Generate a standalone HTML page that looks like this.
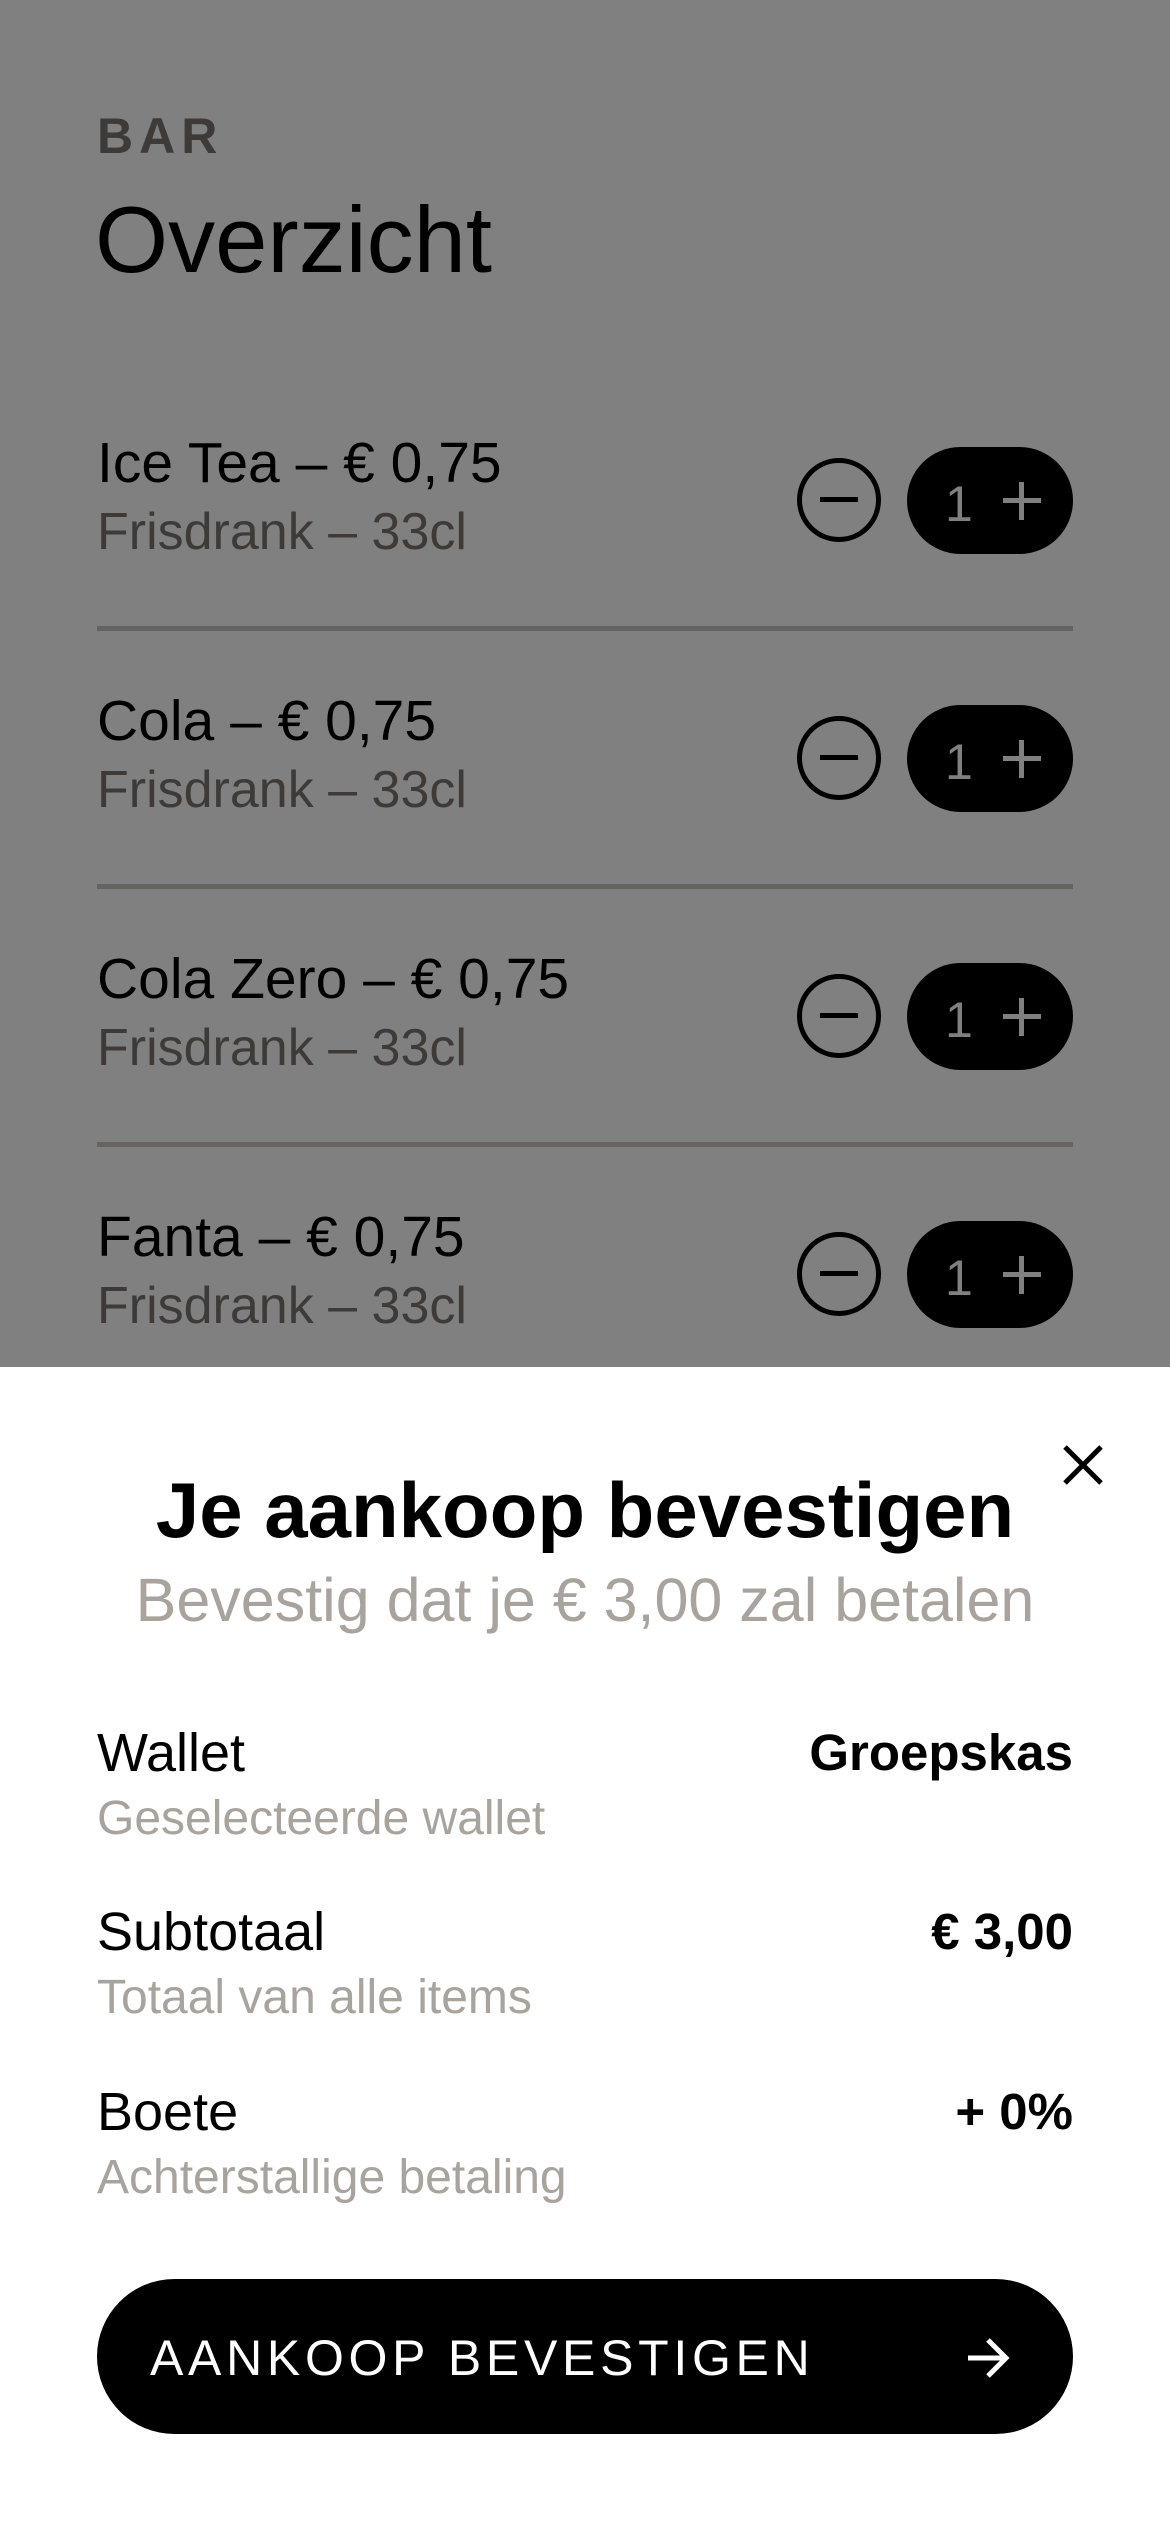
<!DOCTYPE html>
<html><head><meta charset="utf-8"><style>
*{margin:0;padding:0;box-sizing:border-box}
body{width:1170px;height:2532px;position:relative;overflow:hidden;background:#808080;font-family:"Liberation Sans",sans-serif;color:#000}
.a{position:absolute;line-height:1;white-space:nowrap}
.t{font-size:57px;left:97px}
.s{font-size:52px;left:97px;color:#3d3a37}
.hr{position:absolute;left:97px;width:976px;height:5px;background:#666461}
.min{position:absolute;left:797px;width:84px;height:84px;border:5px solid #000;border-radius:50%}
.min:after{content:"";position:absolute;left:18px;right:18px;top:34px;height:5px;background:#000}
.pill{position:absolute;left:907px;width:166px;height:107px;background:#000;border-radius:54px}
.pill .n{position:absolute;left:38px;top:28px;font-size:50px;color:#808080}
.pill .p1{position:absolute;left:96px;top:51px;width:38px;height:5px;background:#808080}
.pill .p2{position:absolute;left:112px;top:35px;width:5px;height:38px;background:#808080}
.sheet{position:absolute;left:0;top:1367px;width:1170px;height:1165px;background:#fff}
.l{font-size:54px;left:97px}
.r{font-size:51px;right:97px;font-weight:bold}
.g{font-size:48px;left:97px;color:#a8a39d}
</style></head><body>
<div class="a" style="left:97px;top:111px;font-size:50px;font-weight:bold;letter-spacing:6px;color:#3d3a37">BAR</div>
<div class="a" style="left:95px;top:193px;font-size:94px">Overzicht</div>

<div class="a t" style="top:435px">Ice Tea – € 0,75</div>
<div class="a s" style="top:506px">Frisdrank – 33cl</div>
<div class="min" style="top:458px"></div>
<div class="pill" style="top:447px"><span class="n">1</span><i class="p1"></i><i class="p2"></i></div>
<div class="hr" style="top:626px"></div>

<div class="a t" style="top:693px">Cola – € 0,75</div>
<div class="a s" style="top:764px">Frisdrank – 33cl</div>
<div class="min" style="top:716px"></div>
<div class="pill" style="top:705px"><span class="n">1</span><i class="p1"></i><i class="p2"></i></div>
<div class="hr" style="top:884px"></div>

<div class="a t" style="top:951px">Cola Zero – € 0,75</div>
<div class="a s" style="top:1022px">Frisdrank – 33cl</div>
<div class="min" style="top:974px"></div>
<div class="pill" style="top:963px"><span class="n">1</span><i class="p1"></i><i class="p2"></i></div>
<div class="hr" style="top:1142px"></div>

<div class="a t" style="top:1209px">Fanta – € 0,75</div>
<div class="a s" style="top:1280px">Frisdrank – 33cl</div>
<div class="min" style="top:1232px"></div>
<div class="pill" style="top:1221px"><span class="n">1</span><i class="p1"></i><i class="p2"></i></div>

<div class="sheet"></div>
<svg class="a" style="left:1061px;top:1443px" width="44" height="44" viewBox="0 0 44 44"><path d="M4 4L40 40M40 4L4 40" stroke="#000" stroke-width="5"/></svg>
<div class="a" style="left:0;width:1170px;text-align:center;top:1471px;font-size:78px;font-weight:bold">Je aankoop bevestigen</div>
<div class="a" style="left:0;width:1170px;text-align:center;top:1570px;font-size:61px;color:#a8a39d">Bevestig dat je € 3,00 zal betalen</div>

<div class="a l" style="top:1726px">Wallet</div>
<div class="a r" style="top:1727px">Groepskas</div>
<div class="a g" style="top:1795px">Geselecteerde wallet</div>
<div class="a l" style="top:1905px">Subtotaal</div>
<div class="a r" style="top:1906px">€ 3,00</div>
<div class="a g" style="top:1974px">Totaal van alle items</div>
<div class="a l" style="top:2085px">Boete</div>
<div class="a r" style="top:2086px">+ 0%</div>
<div class="a g" style="top:2154px">Achterstallige betaling</div>

<div class="a" style="left:97px;top:2279px;width:976px;height:155px;background:#000;border-radius:78px"></div>
<div class="a" style="left:150px;top:2333px;font-size:50px;letter-spacing:4.7px;color:#fff">AANKOOP BEVESTIGEN</div>
<svg class="a" style="left:964px;top:2336px" width="48" height="44" viewBox="0 0 48 44"><path d="M4 22H42M24 4L42 22L24 40" stroke="#fff" stroke-width="5" fill="none"/></svg>
</body></html>
